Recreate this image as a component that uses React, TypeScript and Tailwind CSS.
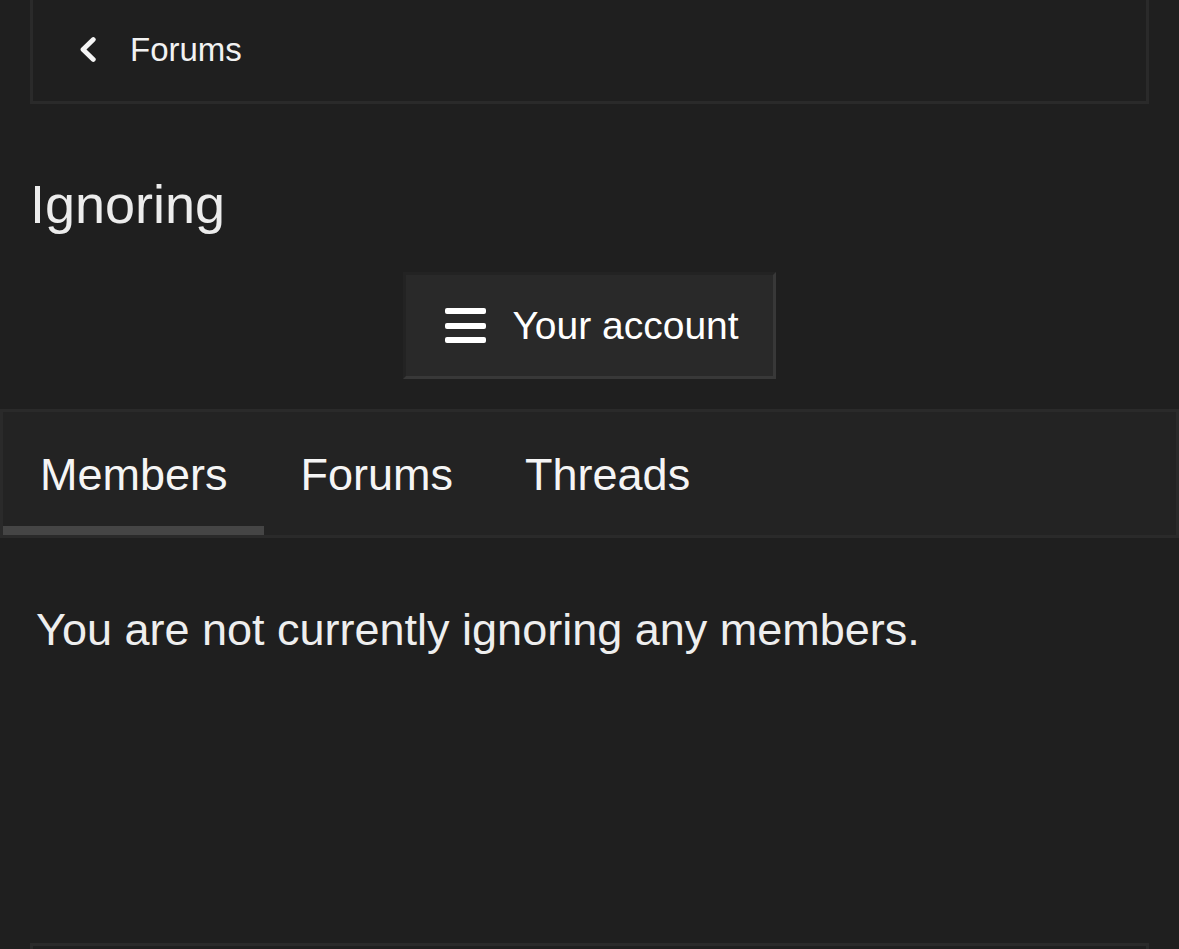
const tabs = ['Members', 'Forums', 'Threads'];

function ChevronLeft() {
    return (
        <svg width="16" height="25" viewBox="0 0 16 25" fill="none">
            <polyline
                points="13.3,2.6 3,12.5 13.3,22.4"
                stroke="#f5f5f5"
                strokeWidth="4.8"
                strokeLinecap="round"
                strokeLinejoin="round"
            />
        </svg>
    );
}

function MenuBars() {
    return (
        <div className="flex flex-col gap-[8.5px] w-[41px]">
            <span className="block h-[6px] rounded-[2px] bg-white"></span>
            <span className="block h-[6px] rounded-[2px] bg-white"></span>
            <span className="block h-[6px] rounded-[2px] bg-white"></span>
        </div>
    );
}

export default function App() {
    const active = 'Members';

    return (
        <div
            className="h-[949px] overflow-hidden bg-[#1f1f1f] text-[#f2f2f2]"
            style={{ fontFamily: '"Liberation Sans", Arial, sans-serif' }}
        >
            {/* Breadcrumb */}
            <div className="mx-[30px] h-[104px] border-x-[3px] border-b-[3px] border-[#2a2a2a] flex items-center pl-[47px] pb-[2px]">
                <ChevronLeft />
                <span className="ml-[34px] text-[33px] leading-none text-[#f2f2f2]">Forums</span>
            </div>

            {/* Page title */}
            <h1 className="mt-[73px] px-[30px] text-[54px] leading-none font-normal text-[#ececec]">
                Ignoring
            </h1>

            {/* Account menu button */}
            <div className="mt-[41px] flex justify-center">
                <button className="h-[107px] flex items-center gap-[26px] pl-[39px] pr-[34px] bg-[#292929] border-[3px] border-t-[#232323] border-l-[#232323] border-r-[#383838] border-b-[#383838]">
                    <MenuBars />
                    <span className="text-[39px] leading-none text-white">Your account</span>
                </button>
            </div>

            {/* Tabs */}
            <div className="mt-[30px] flex bg-[#232323] border-[3px] border-[#2a2a2a]">
                {tabs.map((tab) => (
                    <div
                        key={tab}
                        className={
                            tab === active
                                ? 'pl-[37px] pr-[36px] pt-[40px] pb-[29px] text-[45px] leading-none text-[#f5f5f5] border-b-[9px] border-[#454545]'
                                : 'pl-[37px] pr-[35px] pt-[40px] pb-[29px] text-[45px] leading-none text-[#f5f5f5] border-b-[9px] border-transparent'
                        }
                    >
                        {tab}
                    </div>
                ))}
            </div>

            {/* Tab body */}
            <p className="mt-[69px] pl-[36px] text-[45px] leading-none text-[#eeeeee]">
                You are not currently ignoring any members.
            </p>

            <div className="mt-[291px] mx-[30px] h-[200px] border-[3px] border-[#2a2a2a]"></div>
        </div>
    );
}
